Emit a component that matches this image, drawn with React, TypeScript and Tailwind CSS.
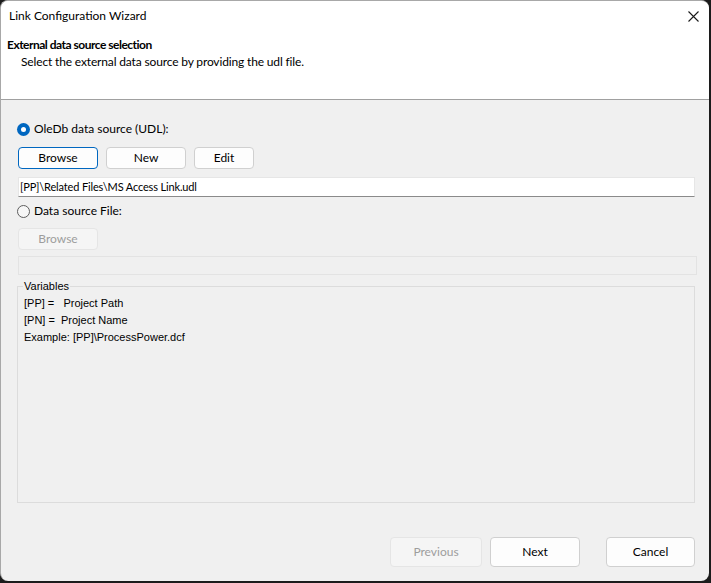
import React from "react";

const seg = { fontFamily: 'Lato, "Noto Sans", sans-serif' } as const;
const ms = { fontFamily: '"Liberation Sans", Arial, sans-serif' } as const;

function Radio({ checked }: { checked: boolean }) {
  return checked ? (
    <span className="w-[13px] h-[13px] rounded-full bg-[#0067c0] flex items-center justify-center shrink-0">
      <span className="w-[5px] h-[5px] rounded-full bg-white" />
    </span>
  ) : (
    <span className="w-[13px] h-[13px] rounded-full border border-[#5d5d5d] bg-[#f6f6f6] shrink-0" />
  );
}

function Btn({ label, w, h, variant }: { label: string; w: string; h: string; variant: "default" | "normal" | "disabled" }) {
  const cls =
    variant === "default"
      ? "border-[#0067c0] bg-[#fdfdfd] text-black"
      : variant === "normal"
      ? "border-[#d0d0d0] bg-[#fdfdfd] text-black"
      : "border-[#e5e5e5] bg-[#f5f5f5] text-[#9d9d9d]";
  return (
    <div className={`${w} ${h} rounded-[4px] border ${cls} flex items-center justify-center text-[12px] shrink-0`} style={seg}>
      {label}
    </div>
  );
}

export default function App() {
  return (
    <div className="w-[711px] h-[583px] bg-[#1c1c1c] overflow-hidden">
      <div className="w-[709px] h-[581px] bg-[#f0f0f0] rounded-[8px] border-l border-t border-[#a8a8a8] overflow-hidden flex flex-col">
        <div className="h-[99px] bg-white border-b border-[#a0a0a0] shrink-0 flex flex-col">
          <div className="h-[29px] flex items-center justify-between pl-[8px] pr-[10px] text-[12px] text-black" style={seg}>
            <span>Link Configuration Wizard</span>
            <svg width="11" height="11" viewBox="0 0 11 11" className="mt-[1px]">
              <path d="M0.5 0.5 L10.5 10.5 M10.5 0.5 L0.5 10.5" stroke="#1a1a1a" strokeWidth="1.1" />
            </svg>
          </div>
          <div className="pl-[6px] pt-[7px] text-[12px] font-bold leading-[16px] tracking-[-0.5px] text-black" style={seg}>
            External data source selection
          </div>
          <div className="pl-[20px] pt-[1px] text-[12px] leading-[16px] tracking-[-0.15px] text-black" style={seg}>
            Select the external data source by providing the udl file.
          </div>
        </div>
        <div className="flex flex-col pl-[16px] pr-[14px] flex-1">
          <div className="mt-[21px] h-[16px] flex items-center gap-[4px] text-[12px] text-black" style={seg}>
            <Radio checked />
            <span>OleDb data source (UDL):</span>
          </div>
          <div className="mt-[10px] flex gap-[8px] pl-[1px]">
            <Btn label="Browse" w="w-[80px]" h="h-[22px]" variant="default" />
            <Btn label="New" w="w-[80px]" h="h-[22px]" variant="normal" />
            <Btn label="Edit" w="w-[60px]" h="h-[22px]" variant="normal" />
          </div>
          <div className="mt-[8px] ml-[1px] h-[20px] bg-white border border-[#e6e6e6] border-b-[#8a8a8a] flex items-center pl-[1px] text-[11px] tracking-[-0.15px] text-black" style={seg}>
            [PP]\Related Files\MS Access Link.udl
          </div>
          <div className="mt-[6px] h-[16px] flex items-center gap-[4px] text-[12px] text-black" style={seg}>
            <Radio checked={false} />
            <span>Data source File:</span>
          </div>
          <div className="mt-[9px] pl-[1px]">
            <Btn label="Browse" w="w-[80px]" h="h-[22px]" variant="disabled" />
          </div>
          <div className="mt-[6px] ml-[1px] mr-[-2px] h-[19px] border border-[#e3e3e3] bg-[#f0f0f0]" />
          <fieldset className="mt-[4px] h-[224px] border border-[#dcdcdc] px-[6px] pt-[2px] text-[11px] text-black" style={ms}>
            <legend className="ml-[-1px] px-[1px] leading-[14px]">Variables</legend>
            <div className="leading-[17px] whitespace-pre">{"[PP] =   Project Path"}</div>
            <div className="leading-[17px] whitespace-pre">{"[PN] =  Project Name"}</div>
            <div className="leading-[17px] whitespace-pre">{"Example: [PP]\\ProcessPower.dcf"}</div>
          </fieldset>
          <div className="mt-[34px] flex justify-end gap-[8px]">
            <Btn label="Previous" w="w-[92px]" h="h-[30px]" variant="disabled" />
            <Btn label="Next" w="w-[90px]" h="h-[30px]" variant="normal" />
            <div className="w-[10px]" />
            <Btn label="Cancel" w="w-[89px]" h="h-[30px]" variant="normal" />
          </div>
        </div>
      </div>
    </div>
  );
}
